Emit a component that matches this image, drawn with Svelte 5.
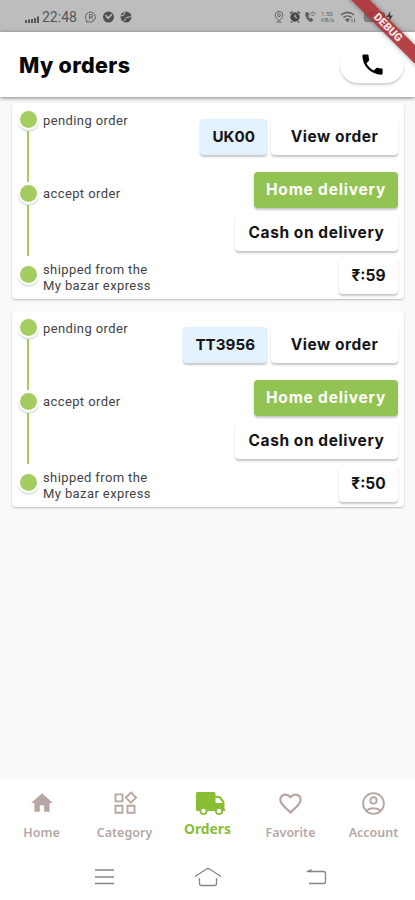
<script lang="ts">
	const orders = [
		{ id: 'UK00', price: 59 },
		{ id: 'TT3956', price: 50 }
	];

	const tabs = ['Home', 'Category', 'Orders', 'Favorite', 'Account'];
	let active = $state('Orders');
</script>

<div class="app">
	<div class="status-bar">
		<svg class="signal" width="15" height="9" viewBox="0 0 15 9" fill="#555">
			<rect x="0" y="6" width="2" height="3" />
			<rect x="3" y="5.5" width="2" height="3.5" />
			<rect x="6" y="5" width="2" height="4" />
			<rect x="9" y="4" width="2" height="5" />
			<rect x="12" y="2.5" width="2" height="6.5" />
		</svg>
		<span class="time">22:48</span>
		<svg class="notices" width="48" height="12" viewBox="0 0 48 12" fill="none" stroke="#606060">
			<path d="M1.8 9.500A5 5 0 1 1 4.500 11H1z" />
			<path d="M4.500 8.500v-5h2a1.300 1.300 0 0 1 0 2.600h-2M6 6l2 2.500" />
			<circle cx="23.500" cy="6" r="5.500" fill="#505050" stroke="none" />
			<path d="M20.500 4l2.700 3.300L27 3" stroke="#bdbdbd" stroke-width="1.400" />
			<circle cx="41" cy="6" r="5.500" fill="#505050" stroke="none" />
			<path d="M36 5l3-1 1-3.500M38.500 10.500l3-4 5-1" stroke="#bdbdbd" />
		</svg>
		<span class="grow"></span>
		<svg width="122" height="16" viewBox="0 0 122 16" fill="none" stroke="#606060">
			<path d="M5 12C2.500 9.500 1.200 8 1.200 6.200a3.800 3.800 0 0 1 7.600 0C8.800 8 7.500 9.500 5 12zM2.500 13h5" />
			<circle cx="5" cy="6.200" r="1.400" />
			<circle cx="21" cy="8" r="4.200" fill="#484848" stroke="#484848" />
			<path d="M16 4.500l2.500-2M26 4.500l-2.500-2M18 12.500l-1 1M24 12.500l1 1" stroke="#484848" stroke-width="1.500" />
			<path d="M21 5.500V8l2 1" stroke="#c4c4c4" />
			<path d="M32 3.500c-1 3 1 8 5 9l2-1.500-2-2-1.500 1c-1-1-1.500-2-1.500-3l1-1-1-2.500z" fill="#606060" />
			<path d="M36 5.300c1.500-2.700 4-2.700 5.500 0M37.300 7c1-1.500 2-1.500 3 0" />
			<path d="M67 6c4-3.300 9-3.300 13 0M69.400 8.500c2.400-2.100 5.800-2.100 8.200 0" stroke-width="1.600" />
			<path d="M71.500 10.500L73.500 13l2-2.500c-1.200-1-2.800-1-4 0zM78 9.500v4M80.500 9.500v4" fill="#606060" stroke-width=".8" />
			<rect x="90.500" y="3.500" width="20" height="9" rx="2" fill="#888" stroke="#777" />
			<path d="M116.500 2l-4 6h3l-1 5 4.500-6.500h-3z" fill="#444" stroke="none" />
			<text class="rate" x="47" y="7">1.50</text>
			<text class="rate" x="47" y="13">KB/s</text>
		</svg>
		<div class="debug"><span>DEBUG</span></div>
	</div>

	<header>
		<h1>My orders</h1>
		<button class="call" aria-label="Call">
			<svg width="27" height="27" viewBox="0 0 24 24">
				<path d="M6.620 10.790c1.440 2.830 3.760 5.140 6.590 6.590l2.200-2.200c.27-.27.67-.36 1.020-.24 1.120.37 2.330.57 3.570.57.55 0 1 .45 1 1V20c0 .55-.45 1-1 1-9.390 0-17-7.610-17-17 0-.55.45-1 1-1h3.500c.55 0 1 .45 1 1 0 1.250.2 2.450.57 3.570.11.35.03.74-.25 1.020l-2.200 2.200z" />
			</svg>
		</button>
	</header>

	<main>
		{#each orders as order}
			<article class="card">
				<ol class="timeline">
					<li>
						<div class="track"><i class="dot"></i><i class="line"></i></div>
						<p class="step">pending order</p>
					</li>
					<li>
						<div class="track"><i class="dot"></i><i class="line"></i></div>
						<p class="step">accept order</p>
					</li>
					<li class="last">
						<div class="track"><i class="dot"></i></div>
						<p class="step">shipped from the<br />My bazar express</p>
					</li>
				</ol>
				<div class="details">
					<div class="row">
						<span class="chip code">{order.id}</span>
						<button class="chip view">View order</button>
					</div>
					<span class="chip delivery">Home delivery</span>
					<span class="chip payment">Cash on delivery</span>
					<span class="chip price">₹:{order.price}</span>
				</div>
			</article>
		{/each}
	</main>

	<nav class="tabs">
		{#each tabs as tab}
			<button class="tab" class:active={tab === active} onclick={() => (active = tab)}>
				{#if tab === 'Home'}
					<svg width="26" height="26" viewBox="0 0 24 24"><path d="M10 20v-6h4v6h5v-8h3L12 3 2 12h3v8z" /></svg>
				{:else if tab === 'Category'}
					<svg width="26" height="26" viewBox="0 0 24 24" class="outline">
						<path d="M3.200 4h6.500v6.500H3.200zM3.200 14.500h6.500V21H3.200zM14.300 14.500h6.500V21h-6.500zM17.500 2.300l4.700 4.700-4.700 4.700L12.800 7z" />
					</svg>
				{:else if tab === 'Orders'}
					<svg class="truck" width="29" height="24" viewBox="0 0 29 24">
						<path
							fill-rule="evenodd"
							d="M1.500 0H18q1.500 0 1.500 1.500V4H23q1 0 1.700.8L28 9q.5.700.5 1.500V17h.5v2h-2a4 4 0 0 1-8 0h-7.500a4 4 0 0 1-8 0H1.500Q0 19 0 17.500v-16Q0 0 1.500 0zM19.500 6v5h6.700V10l-3.400-4zM7.500 16.800a2.200 2.200 0 1 0 0 4.400 2.200 2.200 0 1 0 0-4.400zM23 16.800a2.200 2.200 0 1 0 0 4.400 2.200 2.200 0 1 0 0-4.400z"
						/>
					</svg>
				{:else if tab === 'Favorite'}
					<svg width="27" height="27" viewBox="0 0 24 24">
						<path d="M16.500 3c-1.740 0-3.410.810-4.500 2.090C10.910 3.810 9.240 3 7.500 3 4.420 3 2 5.420 2 8.500c0 3.780 3.400 6.860 8.550 11.540L12 21.350l1.450-1.320C18.600 15.360 22 12.280 22 8.500 22 5.420 19.580 3 16.500 3zm-4.400 15.550l-.1.100-.1-.1C7.140 14.240 4 11.390 4 8.500 4 6.500 5.500 5 7.500 5c1.540 0 3.040.990 3.570 2.360h1.870C13.460 5.990 14.960 5 16.500 5c2 0 3.500 1.500 3.500 3.500 0 2.890-3.140 5.740-7.900 10.050z" />
					</svg>
				{:else}
					<svg width="27" height="27" viewBox="0 0 24 24" class="outline">
						<circle cx="12" cy="12" r="9.200" />
						<circle cx="12" cy="9.300" r="2.800" />
						<path d="M5.600 18.500c3.200-3 9.600-3 12.800 0" />
					</svg>
				{/if}
				<span>{tab}</span>
			</button>
		{/each}
	</nav>

	<div class="system-nav">
		<svg width="20" height="18" viewBox="0 0 20 18"><path d="M0 2h19M0 9h19M0 15.500h19" /></svg>
		<svg class="home-key" width="28" height="20" viewBox="0 0 28 20">
			<path d="M1 9.500L12.500 2q1.500-1 3 0L27 9.500M5.500 11v5.500q0 2 2 2h13q2 0 2-2V11" />
		</svg>
		<svg width="22" height="18" viewBox="0 0 22 18">
			<path d="M1 3.500h16.500q2 0 2 2v8q0 2-2 2H3" />
			<path d="M0 3.500L5.500 1v3z" fill="#858585" stroke="none" />
		</svg>
	</div>
</div>

<style>
	:global(body) {
		background: #fafafa;
	}

	.app {
		width: 415px;
		height: 900px;
		display: flex;
		flex-direction: column;
		position: relative;
		overflow: hidden;
		background: #fafafa;
		font-family: 'Inter', 'Noto Sans', sans-serif;
	}

	button {
		border: none;
		padding: 0;
		font: inherit;
		color: inherit;
		cursor: pointer;
	}

	.status-bar {
		height: 32px;
		flex: none;
		display: flex;
		align-items: center;
		box-sizing: border-box;
		padding: 1px 19px 0 25px;
		background: #bdbdbd;
	}

	.signal {
		margin-top: 4px;
	}

	.time {
		margin: 0 8px 0 2px;
		width: 35px;
		font: 14px/1 'Roboto', sans-serif;
		color: #555;
	}

	.grow {
		flex: 1;
	}

	.rate {
		font: 6px 'Roboto', sans-serif;
		fill: #606060;
		stroke: none;
	}

	.debug {
		position: absolute;
		z-index: 3;
		top: 21px;
		left: 328px;
		width: 120px;
		height: 13px;
		transform: rotate(45deg);
		background: rgba(174, 52, 56, 0.93);
		box-shadow: 0 0 5px rgba(0, 0, 0, 0.4);
		text-align: center;
		font: 900 11px/13px 'Roboto', sans-serif;
		color: #f6e6e6;
	}

	header {
		height: 65px;
		flex: none;
		display: flex;
		align-items: center;
		justify-content: space-between;
		box-sizing: border-box;
		padding: 0 11px 0 19px;
		background: #fff;
		box-shadow: 0 1px 4px rgba(0, 0, 0, 0.5);
		z-index: 2;
	}

	h1 {
		margin: 0;
		font-size: 21.5px;
		font-weight: 800;
		letter-spacing: 0.35px;
		color: #080808;
	}

	.call {
		display: grid;
		place-items: center;
		width: 64px;
		height: 36px;
		border-radius: 18px;
		background: #fff;
		box-shadow: 0 2px 2px rgba(0, 0, 0, 0.18);
	}

	main {
		flex: 1;
		display: flex;
		flex-direction: column;
		gap: 12px;
		padding: 6px 11px 0 12px;
	}

	.card {
		height: 196px;
		display: flex;
		justify-content: space-between;
		box-sizing: border-box;
		padding: 8px 6px 0 8px;
		border-radius: 4px;
		background: #fff;
		box-shadow: 0 1px 2px rgba(0, 0, 0, 0.25);
	}

	.timeline {
		margin: 0;
		padding: 0;
		list-style: none;
	}

	.timeline li {
		display: flex;
		height: 74px;
		gap: 6px;
	}

	.timeline .last {
		padding-top: 7px;
	}

	.track {
		width: 17px;
		display: flex;
		flex-direction: column;
		align-items: center;
	}

	.dot {
		width: 17px;
		height: 17px;
		flex: none;
		border-radius: 50%;
		background: #a3cc61;
		box-shadow: 0 0 0 2px #fff, 0 2px 1px 2px rgba(70, 120, 90, 0.2);
	}

	.line {
		width: 2px;
		height: 51px;
		margin: 3px 1px 0 0;
		background: #a3cc61;
		z-index: 1;
	}

	.step {
		margin: 2px 0 0;
		font: 13px/16px 'Roboto', sans-serif;
		letter-spacing: 0.4px;
		color: #424242;
		white-space: nowrap;
	}

	li:nth-child(2) .step {
		margin-top: 1px;
	}

	.last .step {
		margin-top: -4px;
	}

	.details {
		display: flex;
		flex-direction: column;
		align-items: flex-end;
		gap: 7px;
		padding-top: 8px;
	}

	.row {
		display: flex;
		gap: 4px;
		margin-bottom: 10px;
	}

	.chip {
		height: 36px;
		display: flex;
		align-items: center;
		justify-content: center;
		box-sizing: border-box;
		padding: 0 11px 2px;
		border-radius: 4px;
		background: #fff;
		box-shadow: 0 1.500px 2px rgba(0, 0, 0, 0.22);
		font-size: 15.500px;
		font-weight: 700;
		white-space: nowrap;
		color: #151515;
	}

	.code {
		background: #e3f2fd;
		padding: 0 12px 2px;
		font-size: 15.200px;
	}

	.view {
		width: 127px;
		letter-spacing: 0.5px;
	}

	.delivery {
		width: 144px;
		background: #93c353;
		color: #fff;
		letter-spacing: 0.8px;
	}

	.payment {
		width: 163px;
		letter-spacing: 0.56px;
	}

	.price {
		width: 59px;
	}

	.tabs {
		height: 73px;
		flex: none;
		display: flex;
		background: #fff;
	}

	.tab {
		flex: 1;
		display: flex;
		flex-direction: column;
		align-items: center;
		padding-top: 10px;
		background: none;
		color: #b6a7a2;
		font: 600 12.500px/16px 'Noto Sans', sans-serif;
	}

	.tab svg {
		fill: currentColor;
		flex: none;
	}

	.tab .outline {
		fill: none;
		stroke: currentColor;
		stroke-width: 1.700;
	}

	.tab .truck {
		margin: 2px 0 0 5px;
	}

	.tab span {
		margin-top: auto;
		margin-bottom: 12px;
	}

	.active {
		color: #87be35;
		font-size: 13.800px;
		font-weight: 700;
	}

	.active span {
		margin-bottom: 16px;
	}

	.system-nav {
		height: 47px;
		flex: none;
		display: flex;
		justify-content: space-between;
		align-items: center;
		box-sizing: border-box;
		padding: 1px 87px 0 95px;
		background: #fff;
	}

	.system-nav svg {
		fill: none;
		stroke: #858585;
		stroke-width: 1.300;
	}

	.system-nav .home-key {
		margin-right: 5px;
	}
</style>
